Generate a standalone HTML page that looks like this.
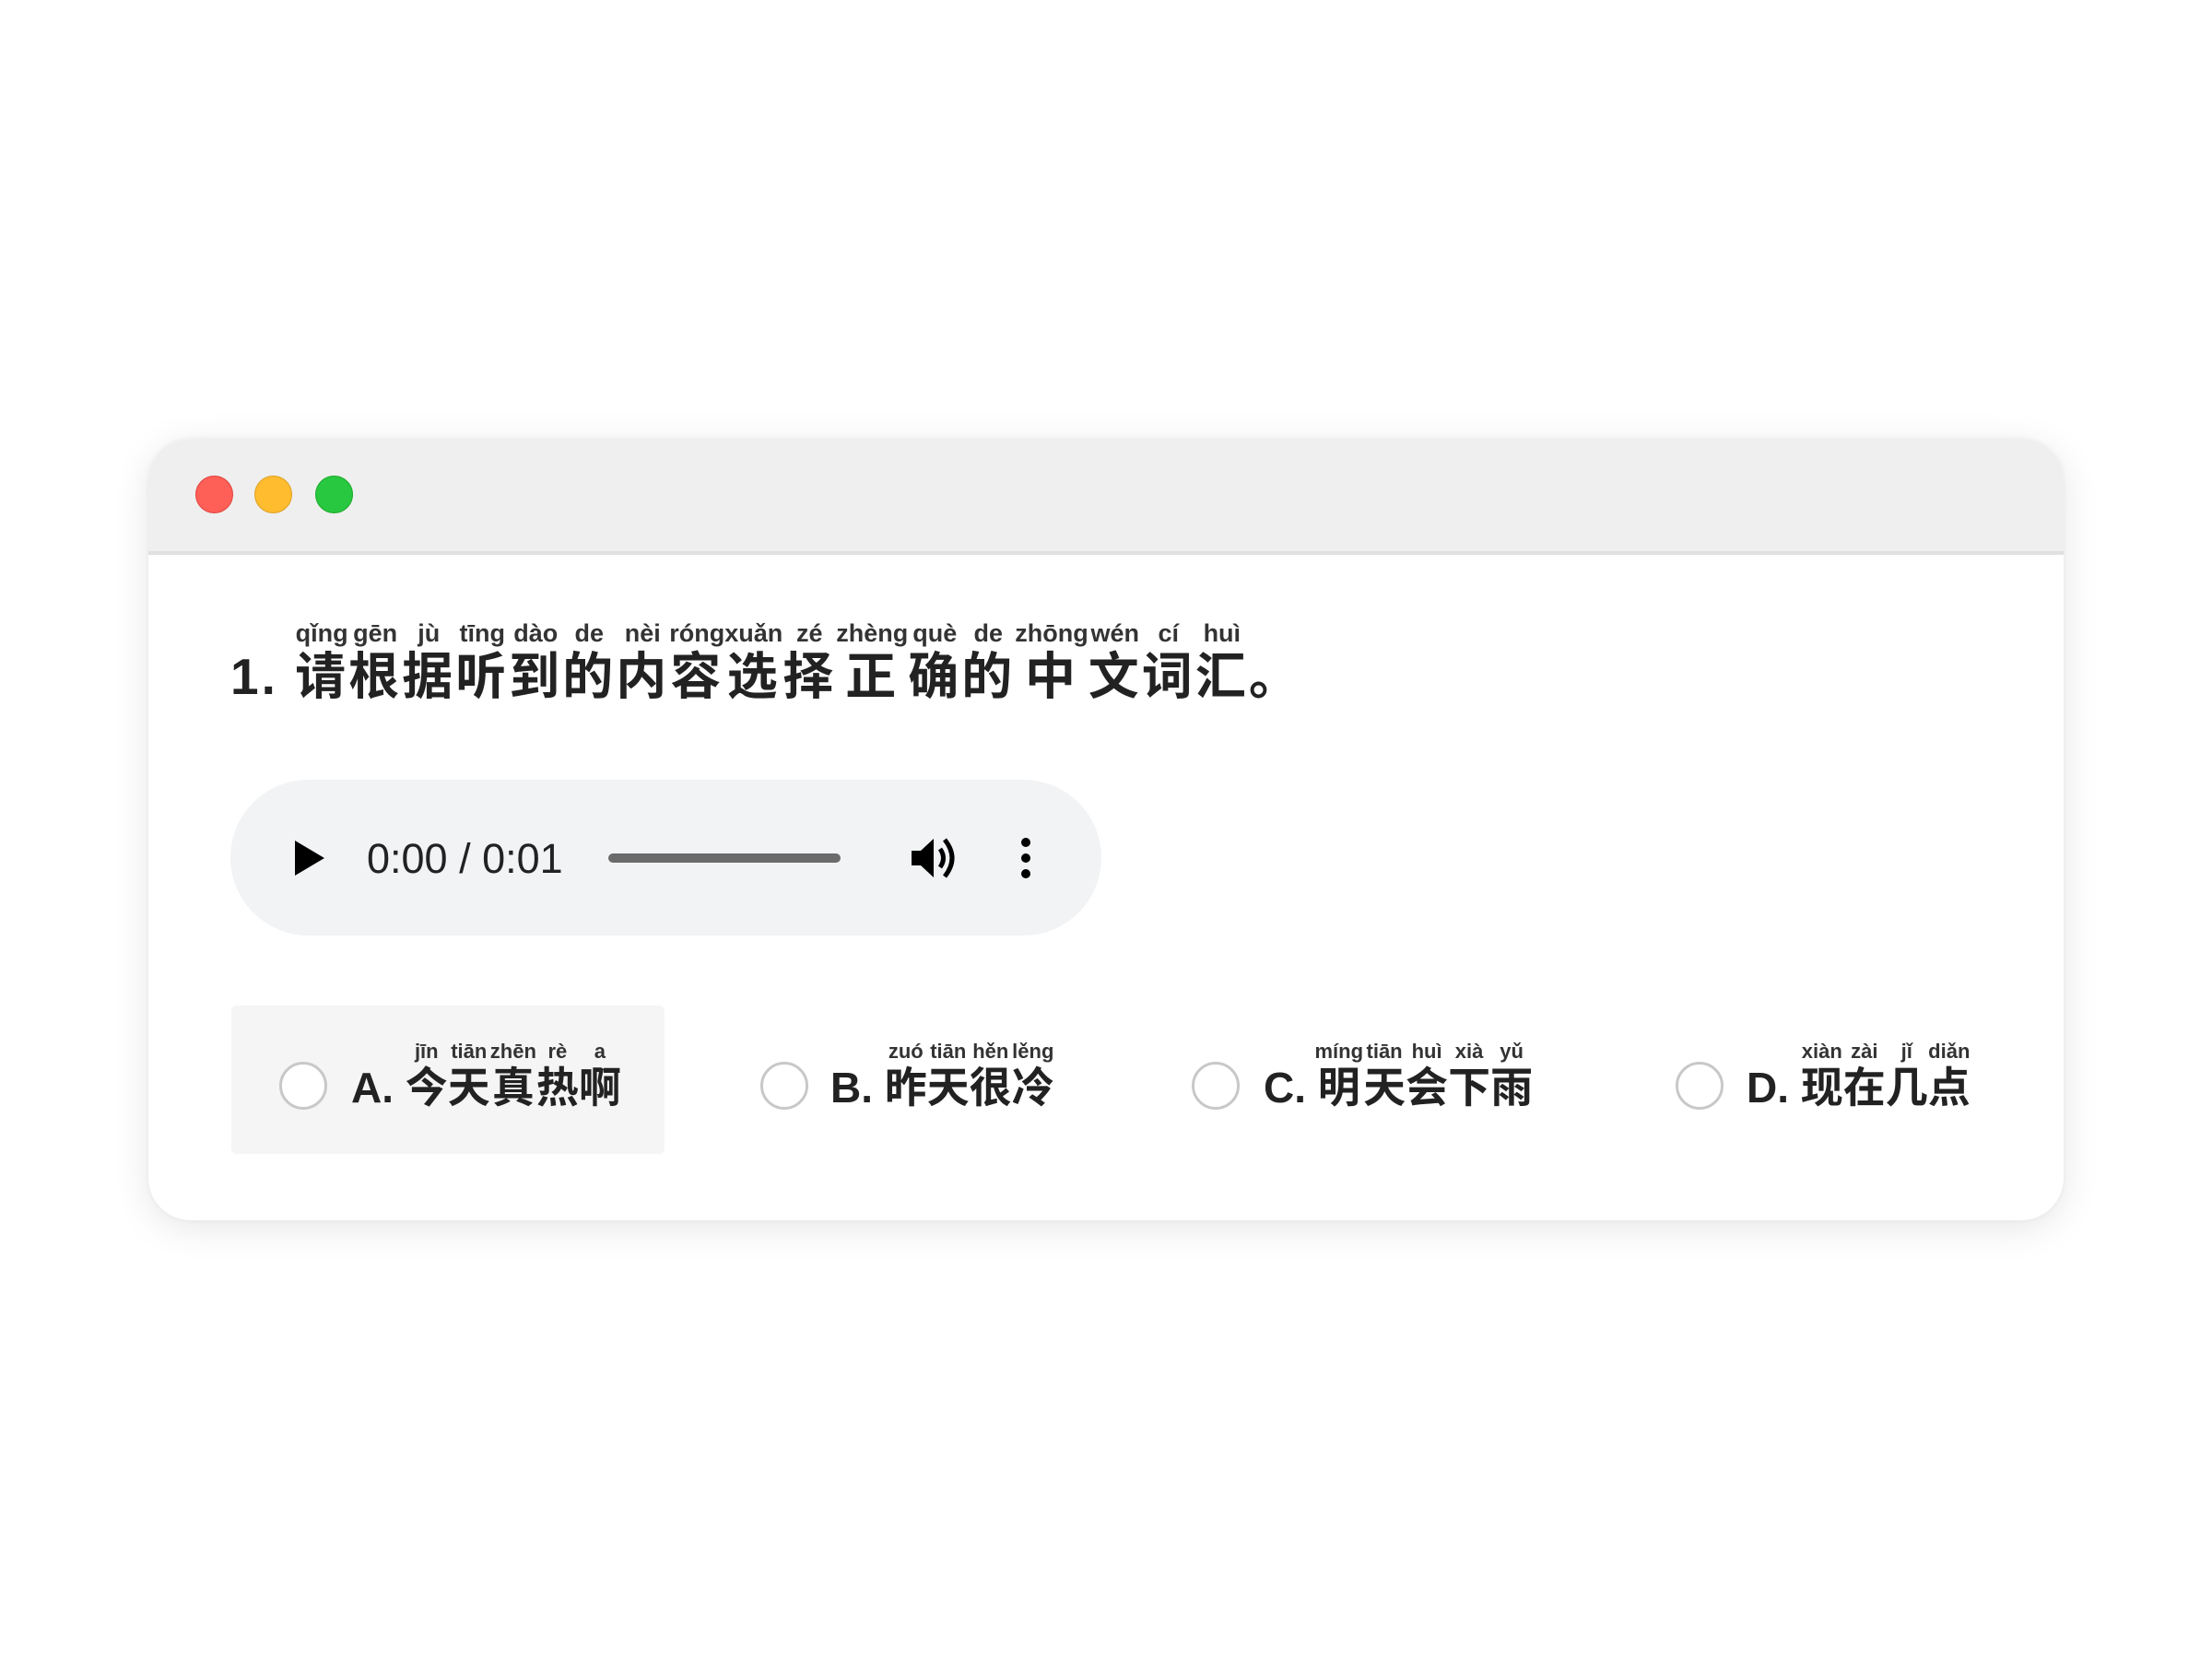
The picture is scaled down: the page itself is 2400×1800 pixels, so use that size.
<!DOCTYPE html>
<html><head><meta charset="utf-8"><style>
html,body{margin:0;padding:0;background:#fff;}
body{width:2400px;height:1800px;position:relative;overflow:hidden;font-family:"Liberation Sans","Noto Sans CJK SC",sans-serif;}
.win{position:absolute;left:161px;top:476px;width:2078px;height:848px;border-radius:46px;background:#fff;box-shadow:0 8px 40px rgba(0,0,0,0.10),0 0 6px rgba(0,0,0,0.05);overflow:hidden;}
.bar{position:absolute;left:0;top:0;right:0;height:122px;background:#efefef;border-bottom:4px solid #e0e0e0;}
.dot{position:absolute;top:40px;width:39px;height:39px;border-radius:50%;}
.q{position:absolute;left:89px;top:196px;font-size:55px;font-weight:bold;color:#222;white-space:nowrap;letter-spacing:3px;font-family:"Liberation Sans","Noto Sans CJK SC",sans-serif;}
ruby{ruby-align:center;}
rt{font-size:27px;font-weight:bold;color:#333;font-family:"Liberation Sans",sans-serif;padding-bottom:2px;letter-spacing:0;}
.audio{position:absolute;left:89px;top:370px;width:945px;height:169px;border-radius:85px;background:#f1f3f4;}
.time{position:absolute;left:148px;top:60px;font-size:45px;color:#222;}
.slider{position:absolute;left:410px;top:80px;width:252px;height:10px;border-radius:5px;background:#6b6b6b;}
.opt{position:absolute;top:615px;height:161px;}
.optA{left:90px;width:470px;background:#f5f5f5;border-radius:6px;}
.radio{position:absolute;width:46px;height:46px;border:3px solid #c8c8c8;border-radius:50%;background:#fff;top:676px;}
.ot{position:absolute;top:652px;font-size:46px;font-weight:bold;color:#222;white-space:nowrap;}
.ot rt{font-size:22px;}
</style></head><body>
<div class="win">
<div class="bar">
<div class="dot" style="left:51px;background:#fe5f57;border:1px solid #e0443e;"></div>
<div class="dot" style="left:115px;background:#febc2e;border:1px solid #dea123;"></div>
<div class="dot" style="left:181px;background:#28c840;border:1px solid #1aab29;"></div>
</div>
<div class="q">1. <ruby>请<rt>qǐng</rt></ruby><ruby>根<rt>gēn</rt></ruby><ruby>据<rt>jù</rt></ruby><ruby>听<rt>tīng</rt></ruby><ruby>到<rt>dào</rt></ruby><ruby>的<rt>de</rt></ruby><ruby>内<rt>nèi</rt></ruby><ruby>容<rt>róng</rt></ruby><ruby>选<rt>xuǎn</rt></ruby><ruby>择<rt>zé</rt></ruby><ruby>正<rt>zhèng</rt></ruby><ruby>确<rt>què</rt></ruby><ruby>的<rt>de</rt></ruby><ruby>中<rt>zhōng</rt></ruby><ruby>文<rt>wén</rt></ruby><ruby>词<rt>cí</rt></ruby><ruby>汇<rt>huì</rt></ruby>。</div>
<div class="audio">
<svg style="position:absolute;left:68px;top:64px" width="36" height="42" viewBox="0 0 36 42"><path d="M2 2 L34 21 L2 40 Z" fill="#000"/></svg>
<div class="time">0:00 / 0:01</div>
<div class="slider"></div>
<svg style="position:absolute;left:737px;top:60px" width="54" height="50" viewBox="0 0 54 50"><path d="M2 17 H12 L26 4 V46 L12 33 H2 Z" fill="#000"/><path d="M33 15 Q40 25 33 35" stroke="#000" stroke-width="5" fill="none"/><path d="M38 5 Q54 25 38 45" stroke="#000" stroke-width="5" fill="none"/></svg>
<svg style="position:absolute;left:856px;top:62px" width="14" height="46" viewBox="0 0 14 46"><circle cx="7" cy="6" r="5" fill="#000"/><circle cx="7" cy="23" r="5" fill="#000"/><circle cx="7" cy="40" r="5" fill="#000"/></svg>
</div>
<div class="opt optA"></div>
<div class="radio" style="left:142px"></div>
<div class="ot" style="left:220px">A. <ruby>今<rt>jīn</rt></ruby><ruby>天<rt>tiān</rt></ruby><ruby>真<rt>zhēn</rt></ruby><ruby>热<rt>rè</rt></ruby><ruby>啊<rt>a</rt></ruby></div>
<div class="radio" style="left:664px"></div>
<div class="ot" style="left:740px">B. <ruby>昨<rt>zuó</rt></ruby><ruby>天<rt>tiān</rt></ruby><ruby>很<rt>hěn</rt></ruby><ruby>冷<rt>lěng</rt></ruby></div>
<div class="radio" style="left:1132px"></div>
<div class="ot" style="left:1210px">C. <ruby>明<rt>míng</rt></ruby><ruby>天<rt>tiān</rt></ruby><ruby>会<rt>huì</rt></ruby><ruby>下<rt>xià</rt></ruby><ruby>雨<rt>yǔ</rt></ruby></div>
<div class="radio" style="left:1657px"></div>
<div class="ot" style="left:1734px">D. <ruby>现<rt>xiàn</rt></ruby><ruby>在<rt>zài</rt></ruby><ruby>几<rt>jǐ</rt></ruby><ruby>点<rt>diǎn</rt></ruby></div>
</div>
</body></html>
